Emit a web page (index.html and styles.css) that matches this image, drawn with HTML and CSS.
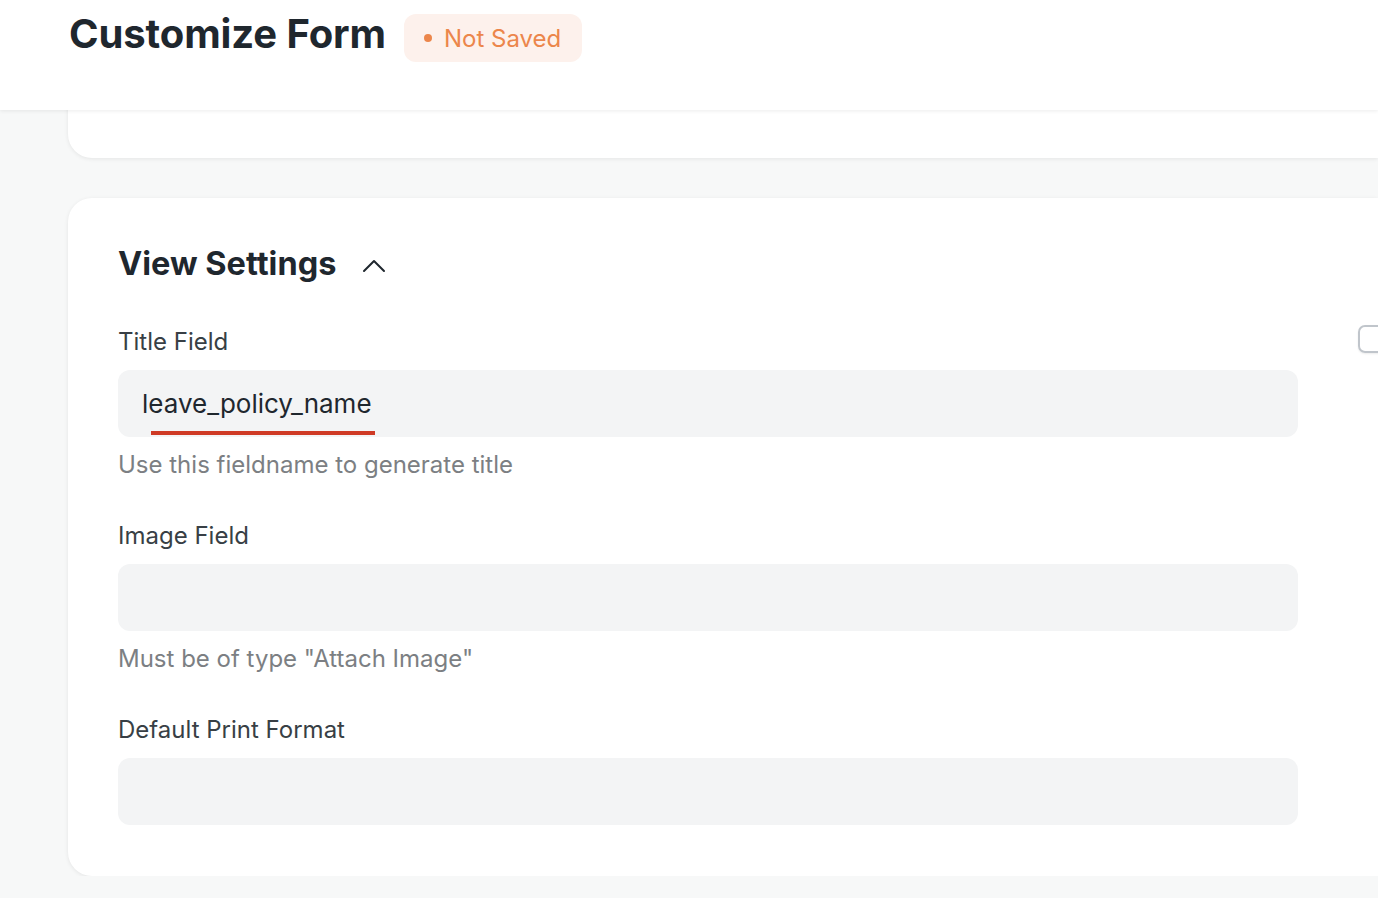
FILE: index.html
```html
<!DOCTYPE html>
<html lang="en">

<head>
    <meta charset="UTF-8">
    <meta name="viewport" content="width=device-width, initial-scale=1.0">
    <title>Customize Form</title>
    <link rel="stylesheet" href="styles.css">
</head>

<body>
    <header class="page-head">
        <h1 class="page-title">Customize Form</h1>
        <span class="indicator">
            <span class="dot"></span>
            Not Saved
        </span>
    </header>

    <div class="page-body">
        <div class="card card-top"></div>

        <div class="card section">
            <div class="section-head">
                <h2>View Settings</h2>
                <svg class="chevron" width="24" height="16" viewBox="0 0 24 16" fill="none">
                    <path d="M2 13 L12 3 L22 13" stroke="#1f272e" stroke-width="2" stroke-linecap="round" stroke-linejoin="round" />
                </svg>
            </div>

            <div class="section-body">
                <div class="fields">
                    <div class="field">
                        <label>Title Field</label>
                        <div class="control">
                            <span class="value">leave_policy_name</span>
                            <span class="spell"></span>
                        </div>
                        <p class="help">Use this fieldname to generate title</p>
                    </div>

                    <div class="field">
                        <label>Image Field</label>
                        <div class="control"></div>
                        <p class="help">Must be of type "Attach Image"</p>
                    </div>

                    <div class="field">
                        <label>Default Print Format</label>
                        <div class="control"></div>
                    </div>
                </div>

                <div class="side">
                    <span class="checkbox"></span>
                </div>
            </div>
        </div>
    </div>
</body>

</html>
```

FILE: styles.css
```css
* {
    box-sizing: border-box;
}

body {
    font-family: Inter, 'Noto Sans', sans-serif;
    background-color: #f7f8f8;
    margin: 0;
    color: #1f272e;
    overflow: hidden;
}

.page-head {
    height: 110px;
    background: #fff;
    padding: 14px 0 0 69px;
    display: flex;
    align-items: flex-start;
    gap: 18px;
    box-shadow: 0 1px 4px rgba(0, 0, 0, 0.08);
    position: relative;
    z-index: 2;
}

.page-title {
    margin: 0;
    font-size: 40px;
    font-weight: 700;
    line-height: 40px;
    letter-spacing: -0.1px;
    color: #1f272e;
}

.indicator {
    display: flex;
    align-items: center;
    gap: 12px;
    height: 48px;
    padding: 0 21px 0 20px;
    background: #fdf1ec;
    border-radius: 12px;
    color: #ec864b;
    font-size: 24px;
    font-weight: 400;
}

.dot {
    width: 8px;
    height: 8px;
    border-radius: 50%;
    background: #ec864b;
}

.page-body {
    padding-left: 68px;
    margin-top: -40px;
}

.card {
    background: #fff;
    border-radius: 24px 0 0 24px;
    box-shadow: 0 1px 4px rgba(0, 0, 0, 0.08);
}

.card-top {
    height: 88px;
}

.section {
    margin-top: 40px;
    height: 678px;
    padding: 44px 0 0 50px;
}

.section-head {
    display: flex;
    align-items: center;
    gap: 26px;
    height: 42px;
}

.section-head h2 {
    margin: 0;
    font-size: 32.5px;
    font-weight: 700;
    color: #1f272e;
}

.chevron {
    margin-top: 6px;
}

.section-body {
    display: flex;
    margin-top: 43px;
}

.fields {
    width: 1180px;
    flex-shrink: 0;
}

.field {
    margin-bottom: 41px;
}

.field label {
    display: block;
    font-size: 24px;
    color: #383f45;
    line-height: 30px;
    margin-bottom: 13px;
}

.control {
    position: relative;
    height: 67px;
    background: #f3f4f5;
    border-radius: 12px;
    padding: 0 24px;
    display: flex;
    align-items: center;
}

.value {
    font-size: 26px;
    color: #1f272e;
}

.spell {
    position: absolute;
    left: 33px;
    width: 224px;
    bottom: 2px;
    height: 4px;
    background: #cf3a25;
}

.help {
    margin: 13px 0 0;
    font-size: 24px;
    color: #7c7f83;
    line-height: 30px;
}

.side {
    padding-left: 60px;
}

.checkbox {
    display: block;
    width: 28px;
    height: 28px;
    border: 2px solid #c0c5cb;
    border-radius: 7px;
    margin-top: -2px;
    box-shadow: 0 1px 2px rgba(0, 0, 0, 0.08);
}
```
